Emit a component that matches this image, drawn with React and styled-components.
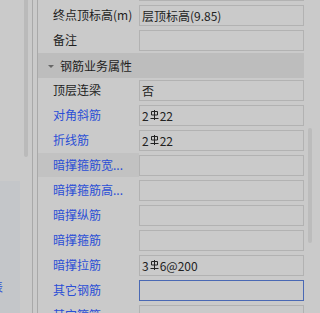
import React from 'react';
import styled, { createGlobalStyle } from 'styled-components';

const GlobalStyle = createGlobalStyle`
  html, body {
    margin: 0;
    padding: 0;
    background: #cacaca;
    overflow: hidden;
  }
  body {
    font-family: "Noto Sans CJK SC", "Microsoft YaHei", sans-serif;
  }
`;

const Frame = styled.div`
  display: flex;
  width: 314px;
  height: 313px;
  overflow: hidden;
  background: #cacaca;
`;

const LeftPane = styled.div`
  display: flex;
  width: 32px;
  height: 100%;
  flex-shrink: 0;
`;

const TreeArea = styled.div`
  display: flex;
  flex-direction: column;
  width: 24px;
  height: 100%;
`;

const LowerBox = styled.div`
  margin-top: 181px;
  width: 20px;
  flex: 1;
  background: #c4c6c9;
  overflow: hidden;
  display: flex;
  flex-direction: column;
  padding-top: 99px;
  box-sizing: border-box;
`;

const ClippedText = styled.span`
  font-size: 12px;
  line-height: 14px;
  color: #2a4fd6;
  margin-left: -9px;
  white-space: nowrap;
`;

const MiniScroll = styled.div`
  width: 4px;
  height: 157px;
  background: #bababa;
  border-radius: 0 0 2px 2px;
`;

const VLine = styled.div`
  width: 1px;
  height: 100%;
  background: #a9a9a9;
  flex-shrink: 0;
`;

const Spacer = styled.div`
  width: ${(p) => p.$w}px;
  flex-shrink: 0;
`;

const Grid = styled.div`
  width: 266px;
  flex-shrink: 0;
  margin-top: -22px;
  display: flex;
  flex-direction: column;
`;

const Row = styled.div`
  display: grid;
  grid-template-columns: 101px 165px;
  height: 25px;
  flex-shrink: 0;
`;

const Label = styled.div`
  padding-left: 15px;
  font-size: 12px;
  line-height: 24px;
  height: 24px;
  color: ${(p) => (p.$blue ? '#2a4fd6' : '#1e1e1e')};
  background: ${(p) => (p.$active ? '#c2c2c2' : 'transparent')};
  white-space: nowrap;
  overflow: hidden;
`;

const ValueBox = styled.div`
  margin-top: 2px;
  height: 21px;
  box-sizing: border-box;
  border: 1px solid ${(p) => (p.$focus ? '#4a69b4' : '#b2b2b2')};
  padding-left: 2px;
  font-size: 12px;
  line-height: 19px;
  color: #222;
  white-space: nowrap;
  display: flex;
  align-items: center;
`;

const Section = styled.div`
  display: flex;
  align-items: center;
  height: 25px;
  flex-shrink: 0;
  background: #bdbdbd;
  font-size: 12px;
  color: #1e1e1e;
  padding-left: 10px;
`;

const Caret = styled.span`
  width: 0;
  height: 0;
  border-left: 3px solid transparent;
  border-right: 3px solid transparent;
  border-top: 3px solid #666;
  margin-right: 6px;
  margin-top: 1px;
`;

const RightScroll = styled.div`
  width: 4px;
  flex-shrink: 0;
  padding-top: 128px;
`;

const Thumb = styled.div`
  width: 4px;
  height: 115px;
  border-radius: 2px;
  background: #bcbcbc;
`;

const Bar = () => (
  <svg width="9" height="10" viewBox="0 0 9 10" style={{ margin: '0 1px 1px 1px' }}>
    <path d="M1.5 1.5h6v3.5h-6z M4.5 0v10 M0.5 8.5h8" stroke="#222" strokeWidth="1" fill="none" />
  </svg>
);

const renderValue = (v) => {
  if (!v) return null;
  if (v.bar) {
    return (
      <>
        {v.pre}
        <Bar />
        {v.post}
      </>
    );
  }
  return v;
};

const rowsTop = [
  { label: '', value: '' },
  { label: '终点顶标高(m)', value: '层顶标高(9.85)' },
  { label: '备注', value: '' },
];

const rowsBottom = [
  { label: '顶层连梁', value: '否' },
  { label: '对角斜筋', blue: true, value: { bar: true, pre: '2', post: '22' } },
  { label: '折线筋', blue: true, value: { bar: true, pre: '2', post: '22' } },
  { label: '暗撑箍筋宽...', blue: true, active: true },
  { label: '暗撑箍筋高...', blue: true },
  { label: '暗撑纵筋', blue: true },
  { label: '暗撑箍筋', blue: true },
  { label: '暗撑拉筋', blue: true, value: { bar: true, pre: '3', post: '6@200' } },
  { label: '其它钢筋', blue: true, focus: true },
  { label: '其它箍筋', blue: true },
];

const PropRow = ({ row }) => (
  <Row>
    <Label $blue={row.blue} $active={row.active}>{row.label}</Label>
    <ValueBox $focus={row.focus}>{renderValue(row.value)}</ValueBox>
  </Row>
);

export default function App() {
  return (
    <>
      <GlobalStyle />
      <Frame>
        <LeftPane>
          <TreeArea>
            <LowerBox>
              <ClippedText>表</ClippedText>
            </LowerBox>
          </TreeArea>
          <MiniScroll />
        </LeftPane>
        <VLine />
        <Spacer $w={4} />
        <VLine />
        <Grid>
          {rowsTop.map((r, i) => (
            <PropRow key={'t' + i} row={r} />
          ))}
          <Section>
            <Caret />
            钢筋业务属性
          </Section>
          {rowsBottom.map((r, i) => (
            <PropRow key={'b' + i} row={r} />
          ))}
        </Grid>
        <Spacer $w={4} />
        <RightScroll>
          <Thumb />
        </RightScroll>
      </Frame>
    </>
  );
}
